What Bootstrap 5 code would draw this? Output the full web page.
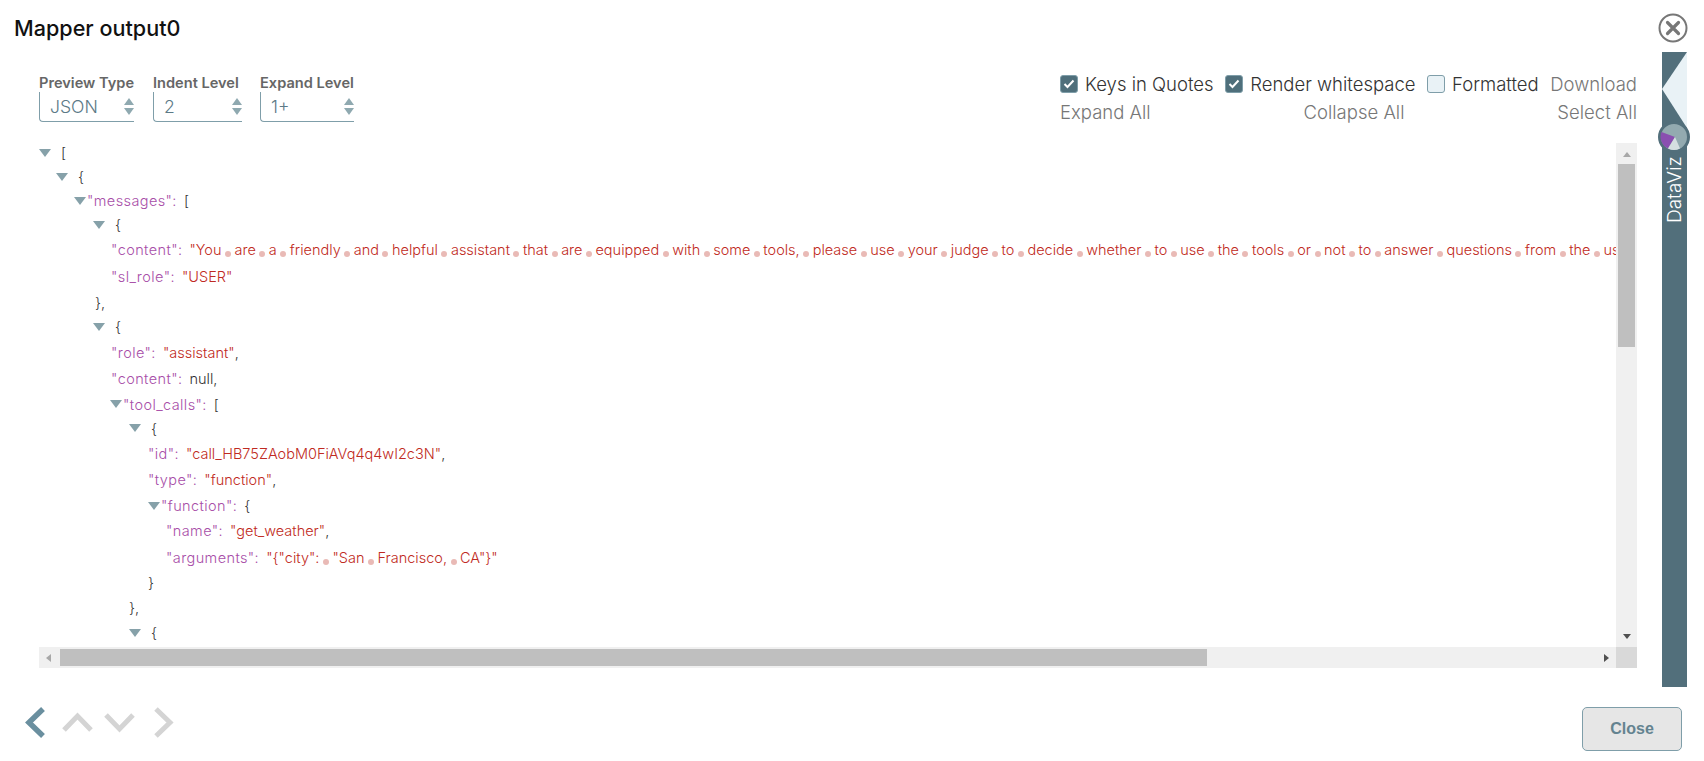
<!doctype html>
<html lang="en"><head><meta charset="utf-8"><title>Mapper output0</title>
<link href="https://cdn.jsdelivr.net/npm/bootstrap@5.3.0/dist/css/bootstrap.min.css" rel="stylesheet">
<script src="https://cdn.jsdelivr.net/npm/bootstrap@5.3.0/dist/js/bootstrap.bundle.min.js"></script>
<style>
html,body{height:100%;margin:0;overflow:hidden;background:#fff}
body{font-family:Inter,"Noto Sans",sans-serif;color:#333;font-weight:300}
.shell{width:1704px;height:761px}
.head-row{height:52px;padding:14px 16px 0 14px}
.dlg-title{font-size:21.6px;font-weight:500;color:#111;line-height:28px;margin:0}
.x-btn{width:30px;height:30px;margin-top:-1px;border:0;background:none;padding:0;display:block}
.mid-row{height:635px}
.left-col{margin-left:39px;width:1598px}
.tools{height:91px}
.picker{width:95px;margin-right:19px}
.picker.w2{width:89px;margin-right:18px}
.picker.w3{width:94px;margin-right:0}
.pick-label{font-weight:600;color:#666;line-height:18px;font-size:14.6px;margin-top:22px;white-space:nowrap}
.pick-box{height:30px;border-left:1px solid #7f9ea9;border-bottom:1px solid #7f9ea9;border-radius:0 0 0 4px;font-size:17.6px;color:#5c7a87;padding-left:10px;line-height:28px}
.spin{display:flex;flex-direction:column;gap:3px}
.spin i{display:block;width:0;height:0;border-left:5px solid transparent;border-right:5px solid transparent}
.spin i:first-child{border-bottom:7px solid #8fa9b0}
.spin i:last-child{border-top:7px solid #8fa9b0}
.right-tools{width:577px;margin-left:auto;margin-top:18px;font-size:18.5px}
.chk-line{height:28px;line-height:28px;white-space:nowrap}
.chk{display:flex;align-items:center;gap:7px}
.tick{width:18px;height:18px;border-radius:3px;background:#4f6f7b;display:inline-flex;align-items:center;justify-content:center;border:1px solid #7f9ea9}
.tick.off{background:#e9f2f6}
.act{color:#777}
.viewer-grid{display:grid;grid-template-columns:1577px 21px;grid-template-rows:504px 21px;width:1598px}
.tree{overflow:hidden;white-space:nowrap;font-size:14.5px;color:#333}
.tree-in{margin-top:-2px}
.rw{display:flex;align-items:center;height:26.6px}
.rw.tg{height:24px}
.rw.cl{height:25px}
.lv0{padding-left:0}.lv1{padding-left:17px}.lv2{padding-left:35px}.lv3{padding-left:54px}.lv3c{padding-left:56px}.lv4{padding-left:72px}.lv5{padding-left:71px}.lv6{padding-left:90px}.lv7{padding-left:109px}.lv8{padding-left:127px}
.tri{width:0;height:0;border-left:6px solid transparent;border-right:6px solid transparent;border-top:8px solid #86a1a9;flex:none;margin-right:10px}
.tri.near{margin-right:1px}
.k{color:#a84ea8;letter-spacing:.4px}.s{color:#bf2a22}.p{margin-right:7px}
.dot{display:inline-block;width:6px;height:6px;border-radius:50%;background:#e9bab6;margin:0 3.5px;vertical-align:-2px}
.vtrack,.htrack{background:#f0f0f0;display:flex;align-items:center}
.vtrack{flex-direction:column;padding:0 2px}
.htrack{padding:2px 0}
.thumb{background:#bfbfbf}
.vtrack .thumb{width:17px;height:183px}
.htrack .thumb{height:17px;width:1147px}
.corner{background:#d9d9d9}
.a-up,.a-dn,.a-l,.a-r{width:0;height:0;border-style:solid;border-color:transparent}
.a-up{border-width:0 4px 5px;border-bottom-color:#a8a8a8;margin:9px 0 7px}
.a-dn{border-width:5px 4px 0;border-top-color:#505050;margin-top:auto;margin-bottom:8px}
.a-l{border-width:4px 5px 4px 0;border-right-color:#a8a8a8;margin:0 9px 0 7px}
.a-r{border-width:4px 0 4px 5px;border-left-color:#505050;margin-left:auto;margin-right:7px}
.rail{width:25px;margin-left:25px;background:#526f7b;position:relative}
.rail svg{display:block;overflow:visible}
.rail-text{writing-mode:vertical-rl;transform:rotate(180deg);color:#fff;font-size:19px;line-height:25px;font-weight:300;height:66px;width:25px;text-align:left}
.foot-row{height:74px;padding:20px 22px 10px 25px}
.nav-ico{display:block}
.gap-a{margin-left:16px}.gap-b{margin-left:11px}.gap-c{margin-left:18px}
.close-btn{width:100px;height:44px;background:#e6e6e6;border:1px solid #7f9ea9;border-radius:5px;color:#648390;font-family:"Liberation Sans",Arial,sans-serif;font-weight:700;font-size:16px;padding:0}
</style></head><body>
<div class="shell d-flex flex-column">
 <div class="head-row d-flex justify-content-between align-items-start">
  <h1 class="dlg-title">Mapper output0</h1>
  <button class="x-btn" aria-label="close"><svg width="30" height="30" viewBox="0 0 30 30"><circle cx="15" cy="15" r="13.5" fill="none" stroke="#777" stroke-width="2"/><path d="M9.500 9.500 20.500 20.500M20.500 9.500 9.500 20.500" stroke="#777" stroke-width="3.200" stroke-linecap="round"/></svg></button>
 </div>
 <div class="mid-row d-flex">
  <div class="left-col">
   <div class="tools d-flex">
    <div class="d-flex">
     <div class="picker"><div class="pick-label">Preview Type</div><div class="pick-box d-flex justify-content-between align-items-center">JSON<span class="spin"><i></i><i></i></span></div></div>
     <div class="picker w2"><div class="pick-label">Indent Level</div><div class="pick-box d-flex justify-content-between align-items-center">2<span class="spin"><i></i><i></i></span></div></div>
     <div class="picker w3"><div class="pick-label">Expand Level</div><div class="pick-box d-flex justify-content-between align-items-center">1+<span class="spin"><i></i><i></i></span></div></div>
    </div>
    <div class="right-tools">
     <div class="chk-line d-flex align-items-center justify-content-between">
      <span class="chk"><span class="tick"><svg width="12" height="10" viewBox="0 0 12 10"><path d="M1.500 5 4.500 8 10.500 1.500" fill="none" stroke="#fff" stroke-width="2"/></svg></span>Keys in Quotes</span>
      <span class="chk"><span class="tick"><svg width="12" height="10" viewBox="0 0 12 10"><path d="M1.500 5 4.500 8 10.500 1.500" fill="none" stroke="#fff" stroke-width="2"/></svg></span>Render whitespace</span>
      <span class="chk"><span class="tick off"></span>Formatted</span>
      <span class="act">Download</span>
     </div>
     <div class="chk-line d-flex justify-content-between act"><span>Expand All</span><span>Collapse All</span><span>Select All</span></div>
    </div>
   </div>
   <div class="viewer-grid">
    <div class="tree"><div class="tree-in">
     <div class="rw tg lv0"><span class="tri"></span>[</div>
     <div class="rw tg lv1"><span class="tri"></span>{</div>
     <div class="rw tg lv2"><span class="tri near"></span><span class="k p">"messages":</span>[</div>
     <div class="rw tg lv3"><span class="tri"></span>{</div>
     <div class="rw lv4"><span class="k p">"content":</span><span class="s">"You<span class="dot"></span>are<span class="dot"></span>a<span class="dot"></span>friendly<span class="dot"></span>and<span class="dot"></span>helpful<span class="dot"></span>assistant<span class="dot"></span>that<span class="dot"></span>are<span class="dot"></span>equipped<span class="dot"></span>with<span class="dot"></span>some<span class="dot"></span>tools,<span class="dot"></span>please<span class="dot"></span>use<span class="dot"></span>your<span class="dot"></span>judge<span class="dot"></span>to<span class="dot"></span>decide<span class="dot"></span>whether<span class="dot"></span>to<span class="dot"></span>use<span class="dot"></span>the<span class="dot"></span>tools<span class="dot"></span>or<span class="dot"></span>not<span class="dot"></span>to<span class="dot"></span>answer<span class="dot"></span>questions<span class="dot"></span>from<span class="dot"></span>the<span class="dot"></span>user."</span></div>
     <div class="rw lv4"><span class="k p">"sl_role":</span><span class="s">"USER"</span></div>
     <div class="rw cl lv3c">},</div>
     <div class="rw tg lv3"><span class="tri"></span>{</div>
     <div class="rw lv4"><span class="k p">"role":</span><span class="s">"assistant"</span>,</div>
     <div class="rw lv4"><span class="k p">"content":</span>null,</div>
     <div class="rw tg lv5"><span class="tri near"></span><span class="k p">"tool_calls":</span>[</div>
     <div class="rw tg lv6"><span class="tri"></span>{</div>
     <div class="rw lv7"><span class="k p">"id":</span><span class="s">"call_HB75ZAobM0FiAVq4q4wI2c3N"</span>,</div>
     <div class="rw lv7"><span class="k p">"type":</span><span class="s">"function"</span>,</div>
     <div class="rw tg lv7"><span class="tri near"></span><span class="k p">"function":</span>{</div>
     <div class="rw lv8"><span class="k p">"name":</span><span class="s">"get_weather"</span>,</div>
     <div class="rw lv8"><span class="k p">"arguments":</span><span class="s">"{"city":<span class="dot"></span>"San<span class="dot"></span>Francisco,<span class="dot"></span>CA"}"</span></div>
     <div class="rw cl lv7">}</div>
     <div class="rw cl lv6">},</div>
     <div class="rw tg lv6"><span class="tri"></span>{</div>
    </div></div>
    <div class="vtrack"><span class="a-up"></span><div class="thumb"></div><span class="a-dn"></span></div>
    <div class="htrack"><span class="a-l"></span><div class="thumb"></div><span class="a-r"></span></div>
    <div class="corner"></div>
   </div>
  </div>
  <div class="rail">
   <svg width="25" height="105" viewBox="0 0 25 105"><path d="M25 0 0 37 25 76Z" fill="#e9f2f6"/><circle cx="12" cy="85" r="14.500" fill="#93aab0" stroke="#526f7b" stroke-width="3"/><path d="M13 85-.5 80A13 13 0 0 0 6 96.500Z" fill="#8a4fb0"/><path d="M13 85 6 96.500A13 13 0 0 0 18 96.500Z" fill="#d5dfe0"/></svg>
   <div class="rail-text">DataViz</div>
  </div>
 </div>
 <div class="foot-row d-flex justify-content-between align-items-start">
  <div class="d-flex align-items-center">
   <svg class="nav-ico" width="21" height="31" viewBox="0 0 21 31"><path d="M18 2 4 15.500 18 29" fill="none" stroke="#6a8f9f" stroke-width="5.500"/></svg>
   <svg class="nav-ico gap-a" width="31" height="21" viewBox="0 0 31 21"><path d="M2 18 15.500 4 29 18" fill="none" stroke="#d4d4d4" stroke-width="5"/></svg>
   <svg class="nav-ico gap-b" width="31" height="21" viewBox="0 0 31 21"><path d="M2 3 15.500 17 29 3" fill="none" stroke="#d4d4d4" stroke-width="5"/></svg>
   <svg class="nav-ico gap-c" width="21" height="31" viewBox="0 0 21 31"><path d="M3 2 17 15.500 3 29" fill="none" stroke="#d4d4d4" stroke-width="5"/></svg>
  </div>
  <button class="close-btn">Close</button>
 </div>
</div>
</body></html>
